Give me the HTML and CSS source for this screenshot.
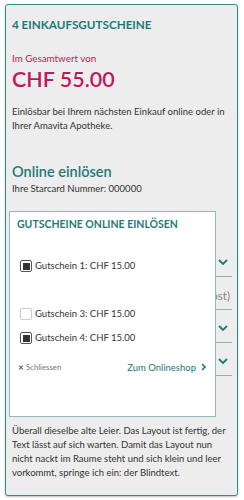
FILE: index.html
```html
<!DOCTYPE html>
<html lang="de">
<head>
<meta charset="utf-8">
<link rel="stylesheet" href="styles.css">
</head>
<body>
<div class="card">
  <h2 class="title">4 EINKAUFSGUTSCHEINE</h2>
  <p class="label">Im Gesamtwert von</p>
  <p class="amount">CHF 55.00</p>
  <p class="text">Einlösbar bei Ihrem nächsten Einkauf online oder in Ihrer Amavita Apotheke.</p>
  <h3 class="online">Online einlösen</h3>
  <p class="starcard">Ihre Starcard Nummer: 000000</p>
  <div class="redeem">
    <ul class="rows">
      <li class="row"><span class="row-text"></span><svg class="chev" viewBox="0 0 10 6" width="10" height="6"><path d="M1 1 L5 5 L9 1" fill="none" stroke="#1e7a78" stroke-width="1.8"/></svg></li>
      <li class="row"><span class="row-text">(gelöst)</span></li>
      <li class="row"><span class="row-text"></span><svg class="chev" viewBox="0 0 10 6" width="10" height="6"><path d="M1 1 L5 5 L9 1" fill="none" stroke="#1e7a78" stroke-width="1.8"/></svg></li>
      <li class="row"><span class="row-text"></span><svg class="chev" viewBox="0 0 10 6" width="10" height="6"><path d="M1 1 L5 5 L9 1" fill="none" stroke="#1e7a78" stroke-width="1.8"/></svg></li>
    </ul>
    <div class="popup">
      <h4 class="popup-title">GUTSCHEINE ONLINE EINLÖSEN</h4>
      <ul class="vouchers">
        <li class="voucher"><span class="box checked"></span>Gutschein 1: CHF 15.00</li>
        <li class="voucher hidden"><span class="box"></span>Gutschein 2: CHF 10.00</li>
        <li class="voucher"><span class="box"></span>Gutschein 3: CHF 15.00</li>
        <li class="voucher"><span class="box checked"></span>Gutschein 4: CHF 15.00</li>
      </ul>
      <div class="popup-foot">
        <span class="close"><span class="x">✕</span> Schliessen</span>
        <span class="shop">Zum Onlineshop <svg viewBox="0 0 5 8" width="5" height="8"><path d="M1 1 L4 4 L1 7" fill="none" stroke="#1e7a78" stroke-width="1.6"/></svg></span>
      </div>
    </div>
  </div>
  <p class="text bottom">Überall dieselbe alte Leier. Das Layout ist fertig, der Text lässt auf sich warten. Damit das Layout nun nicht nackt im Raume steht und sich klein und leer vorkommt, springe ich ein: der Blindtext.</p>
</div>
</body>
</html>
```

FILE: styles.css
```css
* { box-sizing: border-box; }
html, body { margin: 0; padding: 0; background: #fff; }
body {
  font-family: Lato, "Open Sans", sans-serif;
  color: #333;
  padding: 4px 6px 4px 5px;
}
.card {
  background: #ededed;
  border: 1px solid #2f8c88;
  border-radius: 3px;
  box-shadow: 0 1px 2px rgba(0,0,0,0.25);
  padding: 12px 5px 15px 6px;
}
.title {
  margin: 0;
  font-size: 11.7px;
  font-weight: 700;
  color: #1e7a78;
  line-height: 14px;
}
.label {
  margin: 21px 0 0;
  font-size: 9.8px;
  color: #c2185b;
  line-height: 12px;
}
.amount {
  margin: 3px 0 0;
  font-size: 21.5px;
  font-weight: 600;
  color: #c2185b;
  line-height: 24px;
}
.text {
  margin: 14px 0 0;
  font-size: 9.5px;
  line-height: 14px;
  color: #333;
}
.online {
  margin: 30px 0 0;
  font-size: 14.5px;
  font-weight: 600;
  color: #1e7a78;
  line-height: 18px;
}
.starcard {
  margin: 2px 0 0;
  font-size: 9.5px;
  line-height: 12px;
  color: #333;
}
.redeem {
  position: relative;
  margin-top: 16px;
  height: 206px;
}
.rows {
  list-style: none;
  margin: 0;
  padding: 33px 0 0;
}
.row {
  height: 33px;
  border-bottom: 1px solid #7fb8b5;
  display: flex;
  align-items: center;
  justify-content: flex-end;
  padding-top: 4px;
  padding-right: 4px;
}
.row-text {
  font-size: 11.5px;
  color: #888;
  margin-right: -2px;
}
.chev { display: block; }
.popup {
  position: absolute;
  top: 0;
  left: -3px;
  width: 207px;
  height: 206px;
  background: #fff;
  border: 1px solid #8fbcb9;
  padding: 6px 7px 0 7px;
}
.popup-title {
  margin: 0;
  font-size: 10.5px;
  font-weight: 700;
  color: #1e7a78;
  line-height: 13px;
}
.vouchers {
  list-style: none;
  margin: 29px 0 0;
  padding: 0;
}
.voucher {
  display: flex;
  align-items: center;
  gap: 3px;
  font-size: 9.5px;
  line-height: 12px;
  color: #333;
  height: 12px;
  margin-bottom: 12px;
  padding-left: 3px;
}
.voucher.hidden { visibility: hidden; }
.box {
  width: 12px;
  height: 12px;
  border: 1px solid #ccc;
  border-radius: 2px;
  background: #fff;
  display: flex;
  align-items: center;
  justify-content: center;
}
.box.checked { border: 1px solid #555; }
.box.checked::after {
  content: "";
  width: 7px;
  height: 7px;
  background: #333;
}
.popup-foot {
  display: flex;
  justify-content: space-between;
  align-items: center;
  height: 12px;
  margin-top: 17px;
  padding-left: 1px;
  padding-right: 2px;
}
.close {
  font-size: 7.8px;
  color: #777;
}
.close .x { font-size: 7px; font-weight: 700; color: #666; }
.shop {
  font-size: 9.5px;
  color: #1e7a78;
  display: flex;
  align-items: center;
  gap: 5px;
}
.shop svg { display: block; }
.bottom { margin-top: 7px; }
```
